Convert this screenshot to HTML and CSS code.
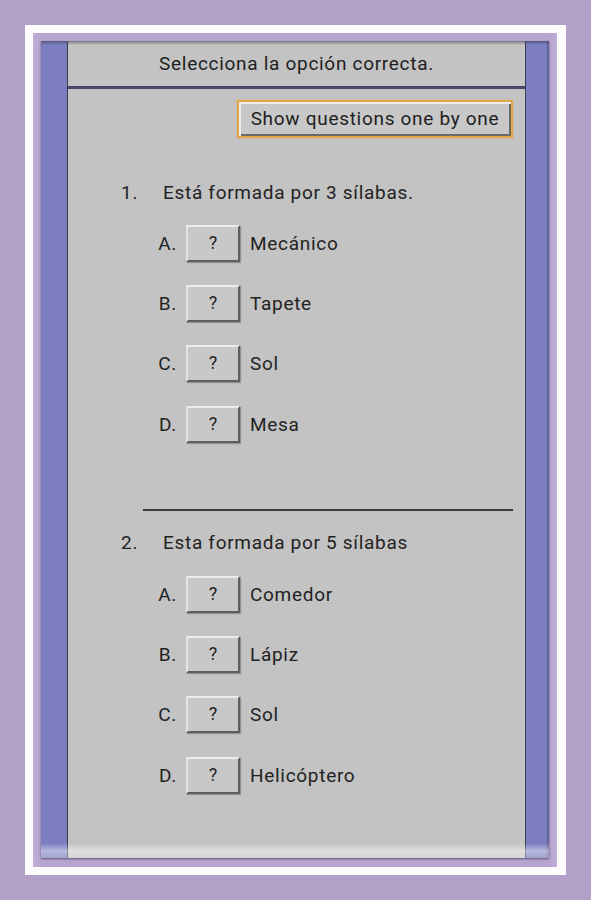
FILE: index.html
```html
<!DOCTYPE html>
<html lang="es">
<head>
<meta charset="utf-8">
<title>Quiz</title>
<link rel="stylesheet" href="styles.css">
</head>
<body>
<div class="frame">
  <div class="inner">
    <div class="panel">
      <div class="side side-left"></div>
      <main class="content">
        <header class="header">Selecciona la opción correcta.</header>
        <div class="toolbar">
          <button class="show-btn" type="button">Show questions one by one</button>
        </div>
        <section class="question">
          <div class="q-title"><span class="q-num">1.</span><span>Está formada por 3 sílabas.</span></div>
          <div class="opt"><span class="opt-letter">A.</span><button class="q-btn" type="button">?</button><span class="opt-label">Mecánico</span></div>
          <div class="opt"><span class="opt-letter">B.</span><button class="q-btn" type="button">?</button><span class="opt-label">Tapete</span></div>
          <div class="opt"><span class="opt-letter">C.</span><button class="q-btn" type="button">?</button><span class="opt-label">Sol</span></div>
          <div class="opt"><span class="opt-letter">D.</span><button class="q-btn" type="button">?</button><span class="opt-label">Mesa</span></div>
        </section>
        <hr class="rule">
        <section class="question q2">
          <div class="q-title"><span class="q-num">2.</span><span>Esta formada por 5 sílabas</span></div>
          <div class="opt"><span class="opt-letter">A.</span><button class="q-btn" type="button">?</button><span class="opt-label">Comedor</span></div>
          <div class="opt"><span class="opt-letter">B.</span><button class="q-btn" type="button">?</button><span class="opt-label">Lápiz</span></div>
          <div class="opt"><span class="opt-letter">C.</span><button class="q-btn" type="button">?</button><span class="opt-label">Sol</span></div>
          <div class="opt"><span class="opt-letter">D.</span><button class="q-btn" type="button">?</button><span class="opt-label">Helicóptero</span></div>
        </section>
      </main>
      <div class="side side-right"></div>
    </div>
  </div>
</div>
</body>
</html>
```

FILE: styles.css
```css
* { box-sizing: border-box; }

html, body {
  margin: 0;
  padding: 0;
}

body {
  width: 591px;
  height: 900px;
  background: #b2a0c9;
  padding: 25px;
  font-family: Roboto, "Noto Sans", "DejaVu Sans", sans-serif;
  color: #222;
  overflow: hidden;
}

.frame {
  height: 850px;
  border: 8px solid #fdfdfd;
  border-right-width: 9px;
  background: #fff;
}

.inner {
  height: 834px;
  padding: 8px 8px 9px 8px;
  background: linear-gradient(90deg, #c0aed8 0, #b7a5d0 8px, #b7a5d0 calc(100% - 8px), #c0aed8 100%);
}

.panel {
  position: relative;
  height: 817px;
  display: grid;
  grid-template-columns: 27px 1fr 24px;
  background: #c3c3c3;
  box-shadow: 0 1px 2px rgba(40, 30, 60, 0.6);
}

.panel::before {
  content: "";
  position: absolute;
  left: 0;
  right: 0;
  top: 0;
  height: 4px;
  background: linear-gradient(rgba(60, 60, 80, 0.55), rgba(60, 60, 80, 0));
  pointer-events: none;
}

.panel::after {
  content: "";
  position: absolute;
  left: 0;
  right: 0;
  bottom: 0;
  height: 14px;
  background: linear-gradient(rgba(255, 255, 255, 0.05), rgba(255, 255, 255, 0.45) 50%, rgba(255, 255, 255, 0.3));
  pointer-events: none;
}

.side {
  background: #7c7ec0;
}

.side-left {
  border-right: 1px solid #3a3a52;
}

.side-right {
  border-left: 1px solid #3a3a52;
  box-shadow: inset -2px 0 2px rgba(40, 40, 80, 0.35);
}

.content {
  display: flex;
  flex-direction: column;
  min-width: 0;
}

.header {
  height: 48px;
  display: flex;
  align-items: center;
  justify-content: center;
  font-size: 19px;
  letter-spacing: 0.7px;
  color: #1e1e1e;
  border-bottom: 3px solid #46466a;
  padding-bottom: 1px;
}

.toolbar {
  display: flex;
  justify-content: flex-end;
  padding: 11px 12px 0 0;
}

.show-btn {
  width: 276px;
  height: 38px;
  font-family: inherit;
  font-size: 19px;
  letter-spacing: 0.7px;
  color: #1e1e1e;
  background: #c8c8c8;
  border: 2px solid #e3a54a;
  box-shadow: inset 2px 2px 0 #ececec, inset -2px -2px 0 #6a6a6a, 0 0 1px #e3a54a;
  padding: 0 0 2px;
  margin: 0;
}

.question {
  display: flex;
  flex-direction: column;
  margin-top: 39px;
}

.q2 {
  margin-top: 16px;
}

.q-title {
  height: 30px;
  display: flex;
  align-items: center;
  font-size: 19px;
  letter-spacing: 0.7px;
  margin-bottom: 6px;
  padding-left: 53px;
}

.q2 .q-title {
  margin-bottom: 7px;
}

.q-num {
  width: 42px;
}

.opt {
  height: 60.3px;
  display: flex;
  align-items: center;
  font-size: 19px;
  letter-spacing: 0.7px;
}

.opt-letter {
  width: 118px;
  text-align: right;
  padding-right: 9px;
}

.q-btn {
  width: 54px;
  height: 37px;
  margin: 0 10px 0 0;
  padding: 0 0 2px;
  font-family: inherit;
  font-size: 18px;
  color: #222;
  background: #c8c8c8;
  border: 0;
  border-top: 2px solid #ececec;
  border-left: 2px solid #e4e4e4;
  border-right: 2px solid #5e5e5e;
  border-bottom: 2px solid #5e5e5e;
  box-shadow: 1px 1px 1px rgba(0, 0, 0, 0.25);
}

.rule {
  margin: 55px 12px 0 75px;
  height: 2px;
  border: 0;
  background: #3a3a3a;
}
```
